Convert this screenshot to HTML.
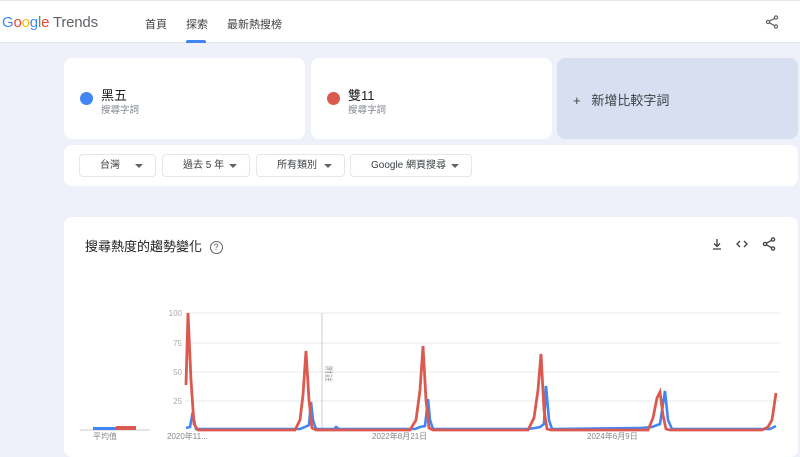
<!DOCTYPE html>
<html><head><meta charset="utf-8"><style>
*{margin:0;padding:0;box-sizing:border-box}
body{width:800px;height:448px;overflow:hidden;background:#eef1f9;font-family:"Liberation Sans","Noto Sans CJK TC",sans-serif;position:relative;color:#202124}
.hdr{position:absolute;left:0;top:0;width:800px;height:43px;background:#fff;border-top:1px solid #e8e8e8;border-bottom:1px solid #e4e6ea}
.logo{position:absolute;left:2px;top:13px;font-size:15px;letter-spacing:-0.2px}
.nav{position:absolute;top:15px;font-size:11px;color:#3c4043}
.card{position:absolute;background:#fff;border-radius:8px}
.dot{position:absolute;width:13px;height:13px;border-radius:50%;left:16px;top:34px}
.t1{position:absolute;left:37px;top:27px;font-size:13px}
.t2{position:absolute;left:37px;top:44px;font-size:9.5px;color:#80868b}
.sel{position:absolute;top:154px;height:23px;border:1px solid #e6e6e6;border-radius:4px;font-size:10px;color:#3c4043;line-height:21px;padding-left:20px}
.sel:after{content:"";position:absolute;right:12px;top:9px;border-left:4px solid transparent;border-right:4px solid transparent;border-top:4px solid #5f6368}
</style></head><body>
<div class="hdr">
<div class="logo"><span style="color:#4285f4">G</span><span style="color:#ea4335">o</span><span style="color:#fbbc05">o</span><span style="color:#4285f4">g</span><span style="color:#34a853">l</span><span style="color:#ea4335">e</span> <span style="color:#5f6368">Trends</span></div>
<div class="nav" style="left:145px">首頁</div>
<div class="nav" style="left:186px">探索</div>
<div style="position:absolute;left:186px;top:39px;width:20px;height:3px;background:#4285f4;border-radius:2px 2px 0 0"></div>
<div class="nav" style="left:227px">最新熱搜榜</div>
<svg style="position:absolute;left:765px;top:14px" width="14" height="14" viewBox="0 0 14 14" fill="none" stroke="#5f6368" stroke-width="1.2"><circle cx="11" cy="2.5" r="1.6"/><circle cx="3" cy="7" r="1.6"/><circle cx="11" cy="11.5" r="1.6"/><path d="M4.4 6.2L9.6 3.3M4.4 7.8L9.6 10.7"/></svg>
</div>
<div class="card" style="left:64px;top:58px;width:241px;height:81px"><div class="dot" style="background:#4285f4"></div><div class="t1">黑五</div><div class="t2">搜尋字詞</div></div>
<div class="card" style="left:311px;top:58px;width:241px;height:81px"><div class="dot" style="background:#db5a50;left:16px"></div><div class="t1">雙11</div><div class="t2">搜尋字詞</div></div>
<div class="card" style="left:557px;top:58px;width:241px;height:81px;background:#d7dff1"><div style="position:absolute;left:16px;top:32px;font-size:13px;color:#3c4043">+&nbsp;&nbsp; 新增比較字詞</div></div>
<div class="card" style="left:64px;top:145px;width:734px;height:41px"></div>
<div class="sel" style="left:79px;width:77px">台灣</div>
<div class="sel" style="left:162px;width:88px">過去 5 年</div>
<div class="sel" style="left:256px;width:89px">所有類別</div>
<div class="sel" style="left:350px;width:122px">Google 網頁搜尋</div>
<div class="card" style="left:64px;top:217px;width:734px;height:240px"></div>
<div style="position:absolute;left:85px;top:236px;font-size:13px">搜尋熱度的趨勢變化 <span style="display:inline-block;width:13px;height:13px;border:1.3px solid #5f6368;border-radius:50%;font-size:9px;line-height:11px;text-align:center;color:#5f6368;vertical-align:1px;margin-left:4px">?</span></div>
<svg style="position:absolute;left:711px;top:237px" width="70" height="14" viewBox="0 0 70 14" fill="none" stroke="#3c4043" stroke-width="1.3"><path d="M6 2v7M3 6.5l3 3 3-3M2 12h8"/><path d="M29 4l-3 3 3 3M33 4l3 3-3 3"/><circle cx="62" cy="2.5" r="1.6"/><circle cx="54" cy="7" r="1.6"/><circle cx="62" cy="11.5" r="1.6"/><path d="M55.4 6.2L60.6 3.3M55.4 7.8L60.6 10.7"/></svg>
<svg style="position:absolute;left:0;top:290px" width="800" height="158" viewBox="0 290 800 158" font-family="Liberation Sans, Noto Sans CJK TC, sans-serif">
<g stroke="#e8e8e8" stroke-width="1"><path d="M185 313H780M185 343H780M185 372H780M185 401H780"/></g>
<path d="M322 313V430" stroke="#ccc"/>
<text x="326" y="366" font-size="8" fill="#999" transform="rotate(90 326 366)">附註</text>
<g font-size="8" fill="#aaa" text-anchor="end"><text x="182" y="316">100</text><text x="182" y="346">75</text><text x="182" y="375">50</text><text x="182" y="404">25</text></g>
<g font-size="8" fill="#888"><text x="167" y="439">2020年11...</text><text x="372" y="439">2022年8月21日</text><text x="587" y="439">2024年6月9日</text><text x="93" y="439">平均值</text></g>
<path d="M80 430H150" stroke="#ccc"/>
<rect x="93" y="427" width="23" height="3" fill="#4285f4"/><rect x="116" y="426" width="20" height="4" fill="#db5a50"/>
<path fill="none" stroke="#4285f4" stroke-width="2.6" d="M186 428L190 427L192 416L194 420L196 429L300 429L305 427L309 425L311 402L313 420L316 429L334 429L336 427L339 429L415 429L420 427L425 426L428 399L430 420L433 429L528 429L535 428L540 427L544 424L546 386L549 420L552 429L640 428L652 427L660 424L665 391L668 420L672 429L770 429L776 426"/>
<path fill="none" stroke="#db5a50" stroke-width="2.8" d="M186 385L188 313L191 380L194 424L198 430L295 430L300 420L303 395L306 351L309 400L312 428L316 430L410 430L416 420L420 390L423 346L426 400L429 428L433 430L528 430L534 418L538 390L541 354L544 410L547 429L551 430L648 430L653 418L657 398L660 392L663 415L666 429L670 430L762 430L768 427L772 420L776 393"/>
</svg>
</body></html>
